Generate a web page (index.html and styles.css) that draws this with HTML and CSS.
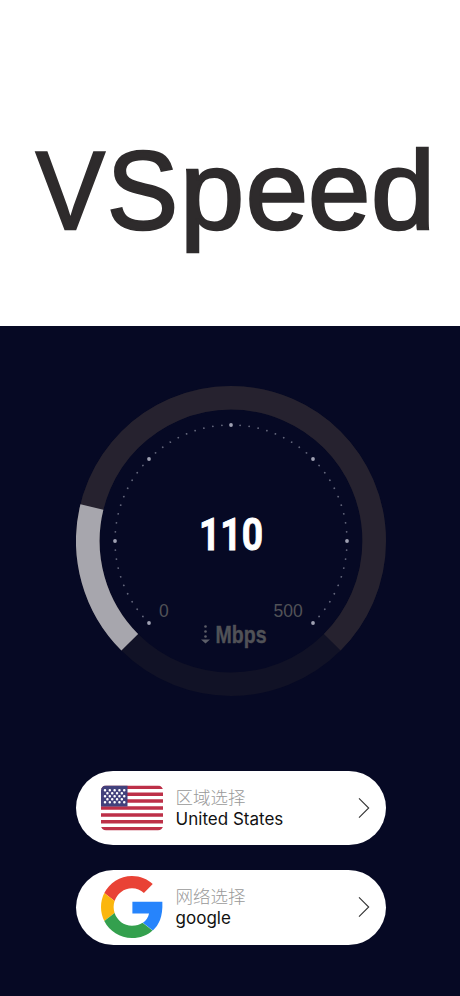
FILE: index.html
```html
<!DOCTYPE html>
<html lang="zh">
<head>
    <meta charset="UTF-8">
    <meta name="viewport" content="width=device-width, initial-scale=1.0">
    <title>VSpeed</title>
    <link rel="stylesheet" href="styles.css">
</head>
<body>

    <header class="header">
        <h1><span class="letter-v">V</span><span class="letter-s">S</span><span class="letter-p">p</span>e<span class="letter-e">e</span><span class="letter-d">d</span></h1>
    </header>

    <main class="main">
        <svg class="gauge" viewBox="0 0 310 310" xmlns="http://www.w3.org/2000/svg">
            <!-- ring -->
            <circle class="ring-base" cx="155" cy="155" r="143.2" />
            <path class="ring-track" d="M53.74 256.26 A143.2 143.2 0 1 1 256.26 256.26" />
            <path class="ring-value" d="M53.74 256.26 A143.2 143.2 0 0 1 15.9 121" />
            <!-- scale -->
            <path class="dots-small" pathLength="600" d="M72.98 237.02 A116 116 0 1 1 237.02 237.02" />
            <g class="dots-big">
                <circle cx="73" cy="237" r="1.9" />
                <circle cx="39" cy="155" r="1.9" />
                <circle cx="73" cy="73" r="1.9" />
                <circle cx="155" cy="39" r="1.9" />
                <circle cx="237" cy="73" r="1.9" />
                <circle cx="271" cy="155" r="1.9" />
                <circle cx="237" cy="237" r="1.9" />
            </g>
            <text class="limit" x="83" y="231">0</text>
            <text class="limit" x="197.5" y="231">500</text>
            <text class="speed" x="123" y="164.3" textLength="64" lengthAdjust="spacingAndGlyphs">110</text>
            <g class="arrow">
                <circle cx="129.5" cy="240.5" r="1.3" />
                <circle cx="129.5" cy="245.5" r="1.3" />
                <circle cx="129.5" cy="250.5" r="1.3" />
                <path d="M125 253.5 H134 L129.5 257.5 Z" />
            </g>
            <text class="unit" x="139.5" y="256.7" textLength="51" lengthAdjust="spacingAndGlyphs">Mbps</text>
        </svg>

        <div class="options">
            <div class="option">
                <svg class="option-icon" viewBox="0 0 62 62">
                    <defs>
                        <clipPath id="flagClip"><rect x="0" y="8.5" width="62" height="45" rx="5" /></clipPath>
                    </defs>
                    <g clip-path="url(#flagClip)">
                        <rect y="8.5" width="62" height="45" fill="#fff" />
                        <path d="M0 10.23H62M0 17.15H62M0 24.08H62M0 31H62M0 37.92H62M0 44.85H62M0 51.77H62" stroke="#bd3048" stroke-width="3.46" />
                        <rect y="8.5" width="26.5" height="21" fill="#42417c" />
                        <path class="stars" d="M4 13.3H24M6.4 16.3H22M4 19.3H24M6.4 22.3H22M4 25.3H24" />
                    </g>
                </svg>
                <div class="option-text">
                    <span class="option-label">区域选择</span>
                    <span class="option-value">United States</span>
                </div>
                <svg class="chevron" viewBox="0 0 12 22"><path d="M1 1.3 L10.7 11 L1 20.7" /></svg>
            </div>

            <div class="option">
                <svg class="option-icon" viewBox="0 0 48 48">
                    <path fill="#e94235" d="M24 9.5c3.54 0 6.71 1.22 9.21 3.6l6.85-6.85C35.9 2.38 30.47 0 24 0 14.62 0 6.51 5.38 2.56 13.22l7.98 6.19C12.43 13.72 17.74 9.5 24 9.5z" />
                    <path fill="#2684fc" d="M47.5 20H24.3v9.1h12.9c-.58 2.96-2.26 5.48-4.78 7.18l7.73 6C44.66 38.1 48 31.9 47.5 20z" />
                    <path fill="#fbb60d" d="M10.53 28.59c-.48-1.45-.76-2.99-.76-4.59s.27-3.14.76-4.59l-7.98-6.19C.92 16.46 0 20.12 0 24c0 3.88.92 7.54 2.56 10.78l7.97-6.19z" />
                    <path fill="#34a04e" d="M24 48c6.48 0 11.93-2.13 15.89-5.81l-7.73-6c-2.15 1.45-4.92 2.3-8.16 2.3-6.26 0-11.57-4.22-13.47-9.91l-7.98 6.19C6.51 42.62 14.62 48 24 48z" />
                </svg>
                <div class="option-text">
                    <span class="option-label">网络选择</span>
                    <span class="option-value">google</span>
                </div>
                <svg class="chevron" viewBox="0 0 12 22"><path d="M1 1.3 L10.7 11 L1 20.7" /></svg>
            </div>
        </div>
    </main>

</body>
</html>
```
FILE: styles.css
```css
body {
    margin: 0;
    min-height: 996px;
    background-color: #060924;
    font-family: "Liberation Sans", "Noto Sans CJK SC", sans-serif;
}
.header {
    height: 326px;
    padding: 125px 0 0 35.5px;
    box-sizing: border-box;
    background-color: #fff;
}
h1 {
    margin: 0;
    color: #2e2b2c;
    font-size: 112px;
    line-height: 132px;
    font-weight: normal;
    white-space: nowrap;
    -webkit-text-stroke: 2.6px #2e2b2c;
}
h1 span {
    display: inline-block;
    transform-origin: left;
}
.letter-v {
    margin-right: -3.4px;
    transform: scaleX(0.92);
}
.letter-s {
    margin-right: -2px;
    transform: scaleX(0.95);
}
.letter-p {
    margin-right: 4px;
    transform: scaleX(1.03);
}
.letter-e {
    margin-right: 0.8px;
}
.letter-d {
    transform: scaleX(1.03);
}
.main {
    display: flex;
    flex-direction: column;
    align-items: center;
    padding: 60px 0 0 2px;
}
.gauge {
    display: block;
    width: 310px;
    height: 310px;
}
.ring-base,
.ring-track,
.ring-value {
    fill: none;
    stroke-width: 23.6;
}
.ring-base {
    stroke: #111226;
}
.ring-track {
    stroke: #26222f;
}
.ring-value {
    stroke: #a7a6ad;
}
.dots-small {
    fill: none;
    stroke: #62657a;
    stroke-width: 1.8;
    stroke-linecap: round;
    stroke-dasharray: 0.01 9.99;
}
.dots-big {
    fill: #9fa1b2;
}
.limit {
    fill: #515257;
    font-size: 17.5px;
}
.speed {
    fill: #fff;
    stroke: #fff;
    stroke-width: 0.9;
    font-family: Roboto, sans-serif;
    font-size: 44px;
    font-weight: bold;
}
.arrow {
    fill: #5c5e68;
}
.unit {
    fill: #515257;
    stroke: #515257;
    stroke-width: 0.4;
    font-size: 24px;
    font-weight: bold;
}
.options {
    display: flex;
    flex-direction: column;
    gap: 25px;
    width: 310px;
    margin-top: 74.5px;
}
.option {
    display: flex;
    align-items: center;
    height: 74.5px;
    padding: 0 16px 0 25px;
    box-sizing: border-box;
    border-radius: 38px;
    background-color: #fff;
}
.option-icon {
    width: 62px;
    height: 62px;
}
.stars {
    fill: none;
    stroke: #fff;
    stroke-width: 2.5;
    stroke-linecap: round;
    stroke-dasharray: 0.01 4.8;
}
.option-text {
    display: flex;
    flex: 1;
    flex-direction: column;
    margin-left: 12.6px;
    padding-top: 1px;
}
.option-label {
    color: #999;
    font-family: "Noto Sans CJK SC", sans-serif;
    font-size: 17.5px;
    font-weight: 300;
    line-height: 22px;
}
.option-value {
    color: #111;
    font-family: Inter, sans-serif;
    font-size: 17px;
    line-height: 23px;
}
.chevron {
    width: 12px;
    height: 22px;
    fill: none;
    stroke: #333;
    stroke-width: 1.1;
}
```
